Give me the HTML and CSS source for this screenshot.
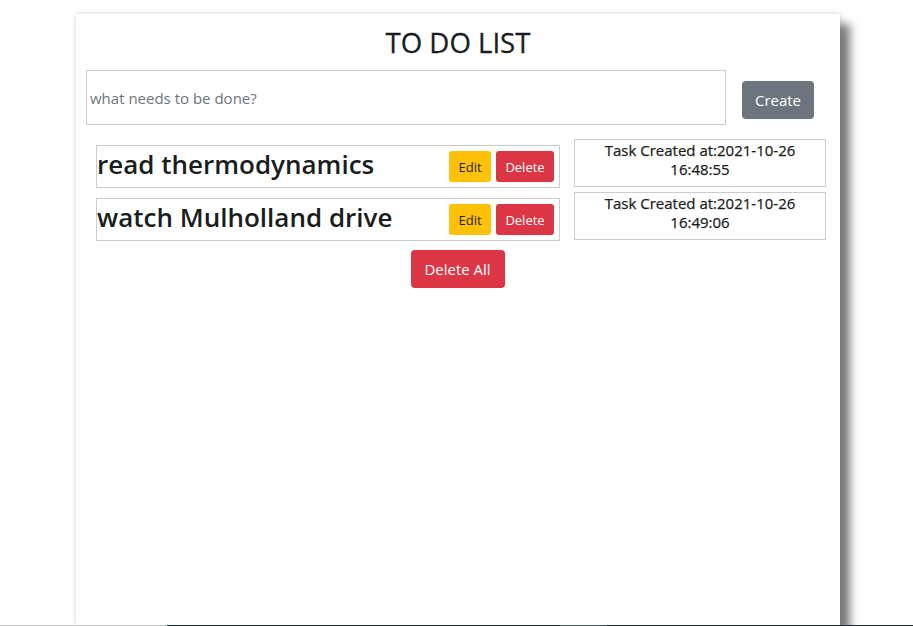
FILE: index.html
```html
<!DOCTYPE html>
<html>
<head>
<meta charset="utf-8">
<link rel="stylesheet" href="styles.css">
</head>
<body>
<div class="card">
  <h1 class="title">TO DO LIST</h1>
  <div class="entry">
    <input class="task-input" type="text" placeholder="what needs to be done?">
    <button class="btn btn-secondary">Create</button>
  </div>
  <div class="list">
    <div class="row">
      <div class="task">
        <span class="task-name">read thermodynamics</span>
        <div class="actions">
          <button class="btn btn-sm btn-warning">Edit</button>
          <button class="btn btn-sm btn-danger">Delete</button>
        </div>
      </div>
      <div class="stamp">Task Created at:2021-10-26<br>16:48:55</div>
    </div>
    <div class="row">
      <div class="task">
        <span class="task-name">watch Mulholland drive</span>
        <div class="actions">
          <button class="btn btn-sm btn-warning">Edit</button>
          <button class="btn btn-sm btn-danger">Delete</button>
        </div>
      </div>
      <div class="stamp">Task Created at:2021-10-26<br>16:49:06</div>
    </div>
  </div>
  <div class="footer">
    <button class="btn btn-danger">Delete All</button>
  </div>
</div>
<div class="taskbar">
  <span class="seg seg-a"></span>
  <span class="seg seg-b"></span>
  <span class="seg seg-c"></span>
  <span class="seg seg-d"></span>
</div>
</body>
</html>
```
FILE: styles.css
```css
html, body {
  margin: 0;
  padding: 0;
  background: #fff;
  height: 626px;
  overflow: hidden;
}
body {
  font-family: "Open Sans", "Noto Sans", sans-serif;
  color: #212529;
  position: relative;
}
.card {
  width: 764px;
  height: 611px;
  margin: 14px 0 0 76px;
  background: #fff;
  box-shadow: 10px 10px 9px #7a7a7a, 0 0 5px rgba(0,0,0,0.18);
  box-sizing: border-box;
  padding-top: 10px;
}
.title {
  margin: 0;
  text-align: center;
  font-size: 27.6px;
  font-weight: 500;
  line-height: 36px;
  height: 36px;
  color: #1a1d20;
  -webkit-text-stroke: 0.3px #1a1d20;
}
.entry {
  display: flex;
  align-items: center;
  margin: 10px 0 0 10px;
}
.task-input {
  width: 640px;
  height: 55px;
  box-sizing: border-box;
  border: 1px solid #ccc;
  padding: 0 3px;
  font-family: inherit;
  font-size: 15px;
  color: #212529;
  outline: none;
  margin: 0;
}
.task-input::placeholder {
  color: #6c757d;
}
.btn {
  font-family: inherit;
  border: none;
  border-radius: 4px;
  color: #fff;
  cursor: pointer;
  margin: 0;
}
.entry .btn {
  margin-left: 16px;
  width: 72px;
  height: 38px;
  font-size: 15px;
  margin-top: 4px;
}
.btn-secondary { background: #6c757d; }
.btn-danger { background: #dc3545; }
.btn-warning { background: #ffc107; color: #212529; }
.btn-sm {
  height: 31px;
  font-size: 13px;
  border-radius: 3px;
  padding: 0;
}
.btn-sm.btn-warning { width: 42px; }
.btn-sm.btn-danger { width: 58px; }
.list {
  margin: 14px 0 0 20px;
  display: flex;
  flex-direction: column;
  gap: 4px;
}
.row {
  display: flex;
  align-items: flex-start;
  gap: 14px;
}
.task {
  margin-top: 6px;
  width: 464px;
  height: 43px;
  box-sizing: border-box;
  border: 1px solid #ccc;
  display: flex;
  align-items: center;
  justify-content: space-between;
  padding: 0 5px 0 0;
}
.task-name {
  font-size: 26px;
  line-height: 1;
  font-weight: 600;
  padding-bottom: 5px;
  color: #1a1d20;
}
.actions {
  display: flex;
  gap: 5px;
}
.stamp {
  width: 252px;
  height: 48px;
  box-sizing: border-box;
  border: 1px solid #ccc;
  text-align: center;
  font-size: 15px;
  line-height: 19px;
  font-weight: 500;
  padding-top: 1px;
  color: #1a1d20;
  -webkit-text-stroke: 0.25px #1a1d20;
}
.footer {
  display: flex;
  justify-content: center;
  margin-top: 9px;
  padding-right: 1px;
}
.footer .btn {
  width: 94px;
  height: 38px;
  font-size: 15px;
}
.taskbar {
  position: absolute;
  left: 0;
  right: 0;
  bottom: 0;
  height: 1px;
  display: flex;
}
.seg { display: block; height: 1px; }
.seg-a { width: 167px; background: #c6c6c6; }
.seg-b { width: 393px; background: #1f2a31; }
.seg-c { width: 47px; background: #4f565c; }
.seg-d { flex: 1; background: #1f2a31; }
```
